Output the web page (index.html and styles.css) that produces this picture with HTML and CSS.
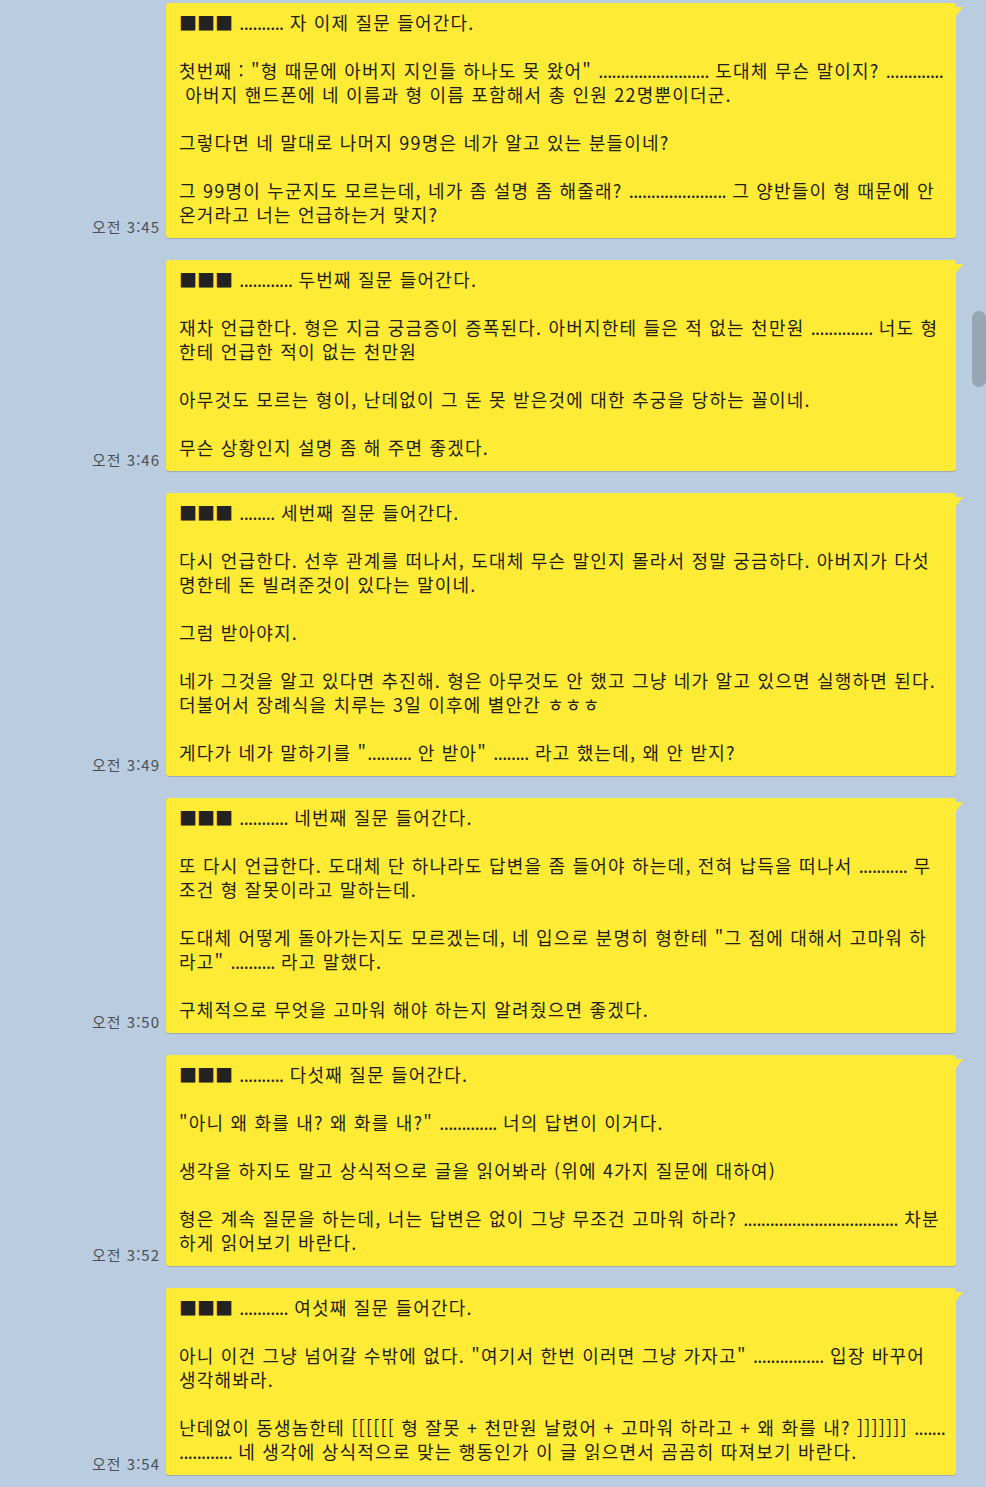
FILE: index.html
```html
<!DOCTYPE html>
<html lang="ko">
<head>
    <meta charset="UTF-8">
    <meta name="viewport" content="width=device-width, initial-scale=1.0">
    <title>채팅</title>
    <link rel="stylesheet" href="styles.css">
</head>
<body>
    <div class="chat">
        <div class="msg">
            <span class="time">오전 3:45</span>
            <div class="bubble">
                <p><span class="mark">■■■</span> <span class="dots">..........</span> 자 이제 질문 들어간다.</p>
                <p>첫번째 : "형 때문에 아버지 지인들 하나도 못 왔어" <span class="dots">.........................</span> 도대체 무슨 말이지? <span class="dots">.............</span><br>&nbsp;아버지 핸드폰에 네 이름과 형 이름 포함해서 총 인원 22명뿐이더군.</p>
                <p>그렇다면 네 말대로 나머지 99명은 네가 알고 있는 분들이네?</p>
                <p>그 99명이 누군지도 모르는데, 네가 좀 설명 좀 해줄래? <span class="dots">......................</span> 그 양반들이 형 때문에 안<br>온거라고 너는 언급하는거 맞지?</p>
            </div>
        </div>

        <div class="msg">
            <span class="time">오전 3:46</span>
            <div class="bubble">
                <p><span class="mark">■■■</span> <span class="dots">............</span> 두번째 질문 들어간다.</p>
                <p>재차 언급한다. 형은 지금 궁금증이 증폭된다. 아버지한테 들은 적 없는 천만원 <span class="dots">..............</span> 너도 형<br>한테 언급한 적이 없는 천만원</p>
                <p>아무것도 모르는 형이, 난데없이 그 돈 못 받은것에 대한 추궁을 당하는 꼴이네.</p>
                <p>무슨 상황인지 설명 좀 해 주면 좋겠다.</p>
            </div>
        </div>

        <div class="msg">
            <span class="time">오전 3:49</span>
            <div class="bubble">
                <p><span class="mark">■■■</span> <span class="dots">........</span> 세번째 질문 들어간다.</p>
                <p>다시 언급한다. 선후 관계를 떠나서, 도대체 무슨 말인지 몰라서 정말 궁금하다. 아버지가 다섯<br>명한테 돈 빌려준것이 있다는 말이네.</p>
                <p>그럼 받아야지.</p>
                <p>네가 그것을 알고 있다면 추진해. 형은 아무것도 안 했고 그냥 네가 알고 있으면 실행하면 된다.<br>더불어서 장례식을 치루는 3일 이후에 별안간 ㅎㅎㅎ</p>
                <p>게다가 네가 말하기를 "<span class="dots">..........</span> 안 받아" <span class="dots">........</span> 라고 했는데, 왜 안 받지?</p>
            </div>
        </div>

        <div class="msg">
            <span class="time">오전 3:50</span>
            <div class="bubble">
                <p><span class="mark">■■■</span> <span class="dots">...........</span> 네번째 질문 들어간다.</p>
                <p>또 다시 언급한다. 도대체 단 하나라도 답변을 좀 들어야 하는데, 전혀 납득을 떠나서 <span class="dots">...........</span> 무<br>조건 형 잘못이라고 말하는데.</p>
                <p>도대체 어떻게 돌아가는지도 모르겠는데, 네 입으로 분명히 형한테 "그 점에 대해서 고마워 하<br>라고" <span class="dots">..........</span> 라고 말했다.</p>
                <p>구체적으로 무엇을 고마워 해야 하는지 알려줬으면 좋겠다.</p>
            </div>
        </div>

        <div class="msg">
            <span class="time">오전 3:52</span>
            <div class="bubble">
                <p><span class="mark">■■■</span> <span class="dots">..........</span> 다섯째 질문 들어간다.</p>
                <p>"아니 왜 화를 내? 왜 화를 내?" <span class="dots">.............</span> 너의 답변이 이거다.</p>
                <p>생각을 하지도 말고 상식적으로 글을 읽어봐라 (위에 4가지 질문에 대하여)</p>
                <p>형은 계속 질문을 하는데, 너는 답변은 없이 그냥 무조건 고마워 하라? <span class="dots">...................................</span> 차분<br>하게 읽어보기 바란다.</p>
            </div>
        </div>

        <div class="msg">
            <span class="time">오전 3:54</span>
            <div class="bubble">
                <p><span class="mark">■■■</span> <span class="dots">...........</span> 여섯째 질문 들어간다.</p>
                <p>아니 이건 그냥 넘어갈 수밖에 없다. "여기서 한번 이러면 그냥 가자고" <span class="dots">................</span> 입장 바꾸어<br>생각해봐라.</p>
                <p>난데없이 동생놈한테 [[[[[[ 형 잘못 + 천만원 날렸어 + 고마워 하라고 + 왜 화를 내? ]]]]]]] <span class="dots">.......</span><br><span class="dots">............</span> 네 생각에 상식적으로 맞는 행동인가 이 글 읽으면서 곰곰히 따져보기 바란다.</p>
            </div>
        </div>
    </div>

    <div class="scrollThumb"></div>
</body>
</html>
```

FILE: styles.css
```css
body {
    margin: 0;
    overflow: hidden;
    background-color: #bacde0;
    font-family: "Noto Sans CJK KR", "Noto Sans", sans-serif;
    color: #1e1e1e;
}
.chat {
    display: flex;
    flex-direction: column;
    gap: 22px;
    padding: 3px 30px 12px 0;
}
.msg {
    display: flex;
    justify-content: flex-end;
    align-items: flex-end;
    gap: 6px;
}
.time {
    font-size: 15px;
    line-height: 18px;
    letter-spacing: 1px;
    color: #4a4f56;
    padding-bottom: 2px;
    white-space: nowrap;
}
.bubble {
    position: relative;
    width: 764px;
    padding: 7px 13px 12px;
    background-color: #feeb35;
    border-radius: 3px;
    box-shadow: 0 1px 1px rgba(0, 0, 0, .18);
    font-size: 18px;
    line-height: 24px;
    letter-spacing: 1.2px;
    white-space: nowrap;
}
/* tail at the top right corner */
.bubble::after {
    content: "";
    position: absolute;
    top: 4px;
    right: -7px;
    width: 7px;
    height: 9px;
    background-color: #feeb35;
    clip-path: polygon(0 0, 100% 0, 0 100%);
}
.bubble p {
    margin: 0 0 24px;
}
.bubble p:last-child {
    margin-bottom: 0;
}
.mark {
    color: #222;
    letter-spacing: 0;
}
.dots {
    letter-spacing: -0.6px;
}
.scrollThumb {
    position: fixed;
    right: 0;
    top: 311px;
    width: 14px;
    height: 76px;
    border-radius: 7px;
    background-color: #97a6b5;
}
```
